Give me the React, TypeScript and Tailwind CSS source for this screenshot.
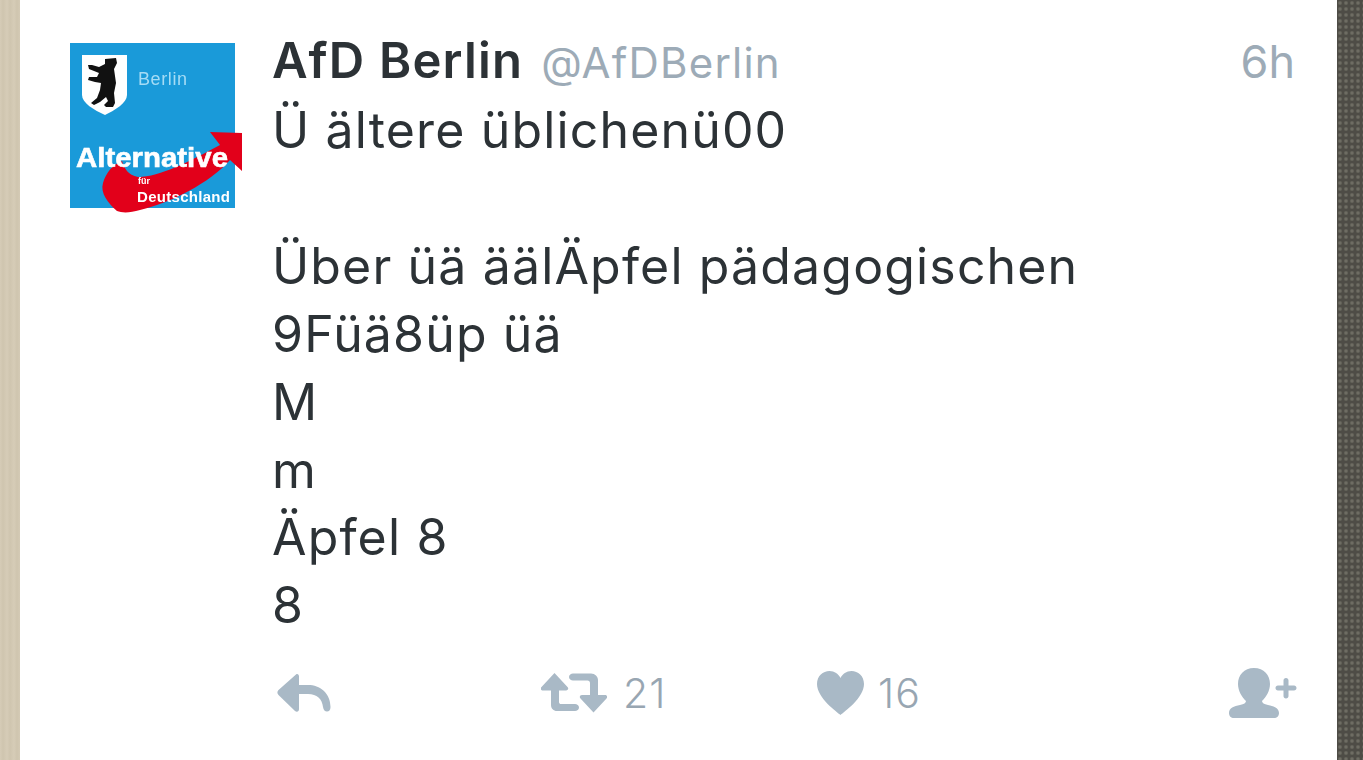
import React from 'react';

const tweetLines = [
  'Ü ältere üblichenü00',
  '\u00a0',
  'Über üä äälÄpfel pädagogischen',
  '9Füä8üp üä',
  'M',
  'm',
  'Äpfel 8',
  '8',
];

function Avatar() {
  return (
    <svg className="w-[175px] h-[172px] shrink-0 blur-[0.6px]" viewBox="0 0 175 172">
      <rect x="0" y="0" width="165" height="165" fill="#1a9ad9" />
      <path d="M12 12H57V52C57 60 45 67 35 72C24 67 12 60 12 52Z" fill="#fff" />
      <path d="M35 16L46 15L47 20L44 26L46 40L44 50L45 60L43 64L36 64L34 62L38 58L36 54L30 59L24 62L21 60L27 55L30 47L31 40L25 39L18 37L19 34L27 34L29 30L24 28L19 26L18 22L22 22L29 24L35 21Z" fill="#111" />
      <text x="68" y="42" fontSize="18" fill="#a5dcf5" fontFamily="Liberation Sans, sans-serif" textLength="49">Berlin</text>
      <path d="M47 168C38 160 30 150 33 140C36 130 42 122 52 118C54 125 58 132 68 134C90 134 120 118 150 102L140 89L172 90V128L160 117C140 140 100 160 70 167C60 170 52 170 47 168Z" fill="#e2001a" />
      <text x="6" y="124" fontSize="27" fontWeight="700" fill="#fff" stroke="#fff" strokeWidth="0.6" fontFamily="Liberation Sans, sans-serif" textLength="152" lengthAdjust="spacingAndGlyphs">Alternative</text>
      <text x="68" y="141" fontSize="9" fontWeight="700" fill="#fff" fontFamily="Liberation Sans, sans-serif">für</text>
      <text x="67" y="159" fontSize="15" fontWeight="700" fill="#fff" fontFamily="Liberation Sans, sans-serif" textLength="93">Deutschland</text>
    </svg>
  );
}

function ReplyIcon() {
  return (
    <svg className="w-[54px] h-[40px]" viewBox="0 0 54 40" fill="#a9b9c6">
      <path d="M19 1.500C20.500 0.500 22 1.500 22 3.500V12H31C43 12 53.500 20 53.500 34C53.500 37 52 38.500 50 38.500C48 38.500 46.500 37 46 34C45 26 40 21 31 21H22V36C22 38.500 20 39.500 18 38L1.500 22C0 20.500 0 18.500 1.500 17Z" />
    </svg>
  );
}

function RetweetIcon() {
  return (
    <svg className="w-[66px] h-[40px]" viewBox="0 0 66 40" fill="#a9b9c6">
      <path d="M13.500 0L26.500 14C28 15.500 27 17.500 25 17.500H18V29C18 30.500 19 31 20 31H34C36 31 38 32.500 38 34.500C38 36.500 36 38 34 38H16C12.500 38 10 35.500 10 32V17.500H2C0 17.500 -1 15.500 0.500 14Z" />
      <path d="M52.500 39.500L39.500 25.500C38 24 39 22 41 22H49V10C49 8.500 48 7.500 46.500 7.500H32C30 7.500 28 6 28 4C28 2 30 0.500 32 0.500H50C54 0.500 57 3.500 57 7V22H64C66 22 67 24 65.500 25.500Z" />
    </svg>
  );
}

function HeartIcon() {
  return (
    <svg className="w-[47px] h-[44px]" viewBox="0 0 47 44" fill="#a9b9c6">
      <path d="M23.500 44C20 41 0 27 0 13C0 5 6 0 12.500 0C17.500 0 21.500 3 23.500 7C25.500 3 29.500 0 34.500 0C41 0 47 5 47 13C47 27 27 41 23.500 44Z" />
    </svg>
  );
}

function FollowIcon() {
  return (
    <svg className="w-[68px] h-[50px]" viewBox="0 0 68 50" fill="#a9b9c6">
      <path d="M25 0C35 0 41 7 41 16C41 23 37 29 33 33C33 35 35 36 39 37C45 38 50 40 50 45C50 48 48 50 45 50H5C2 50 0 48 0 45C0 40 5 38 11 37C15 36 17 35 17 33C13 29 9 23 9 16C9 7 15 0 25 0Z" />
      <path d="M57 10C58.500 10 59.500 11 59.500 12.500V17.500H65C66.500 17.500 67.500 18.500 67.500 20C67.500 21.500 66.500 22.500 65 22.500H59.500V28C59.500 29.500 58.500 30.500 57 30.500C55.500 30.500 54.500 29.500 54.500 28V22.500H49C47.500 22.500 46.500 21.500 46.500 20C46.500 18.500 47.500 17.500 49 17.500H54.500V12.500C54.500 11 55.500 10 57 10Z" />
    </svg>
  );
}

export default function App() {
  return (
    <div className="flex h-[760px] w-full overflow-hidden bg-white font-['Inter','Liberation_Sans',sans-serif]">
      {/* Left wall */}
      <div className="w-5 shrink-0 bg-[#d3c8b2] bg-[repeating-linear-gradient(90deg,#d6ccb7_0px,#cfc5af_3px,#d6ccb7_7px)]" />

      {/* Tweet card */}
      <div className="flex flex-1 pl-[50px] pt-[43px] pr-[40px]">
        <Avatar />
        <div className="flex-1 min-w-0 ml-[27px] -mt-[16px] flex flex-col">
          <div className="flex items-baseline h-[68px] pr-[2px]">
            <span className="text-[49px] font-semibold tracking-[1.2px] text-[#2c3236] leading-[68px]">AfD Berlin</span>
            <span className="ml-[18px] text-[42px] font-normal tracking-[1.2px] text-[#9dabb7] leading-[68px]">@AfDBerlin</span>
            <span className="ml-auto text-[45px] font-normal text-[#9dabb7] leading-[68px]">6h</span>
          </div>
          <div className="text-[50px] font-normal tracking-[1.15px] leading-[67.9px] text-[#2c3236] mt-[2px]">
            {tweetLines.map((line, i) => (
              <div key={i}>{line}</div>
            ))}
          </div>
          <div className="flex items-center mt-[28px] h-[50px] text-[41px] font-light tracking-[1px] text-[#98a6b2]">
            <div className="w-[269px] pl-[5px]">
              <ReplyIcon />
            </div>
            <div className="w-[276px] flex items-center gap-[16px]">
              <RetweetIcon />
              <span>21</span>
            </div>
            <div className="flex items-center gap-[14px]">
              <HeartIcon />
              <span>16</span>
            </div>
            <div className="ml-auto">
              <FollowIcon />
            </div>
          </div>
        </div>
      </div>

      {/* Right wall */}
      <div className="w-[26px] shrink-0 bg-[#4e4c46] bg-[radial-gradient(circle,#6e6c63_1px,transparent_2.5px)] bg-[length:6px_6px]" />
    </div>
  );
}
